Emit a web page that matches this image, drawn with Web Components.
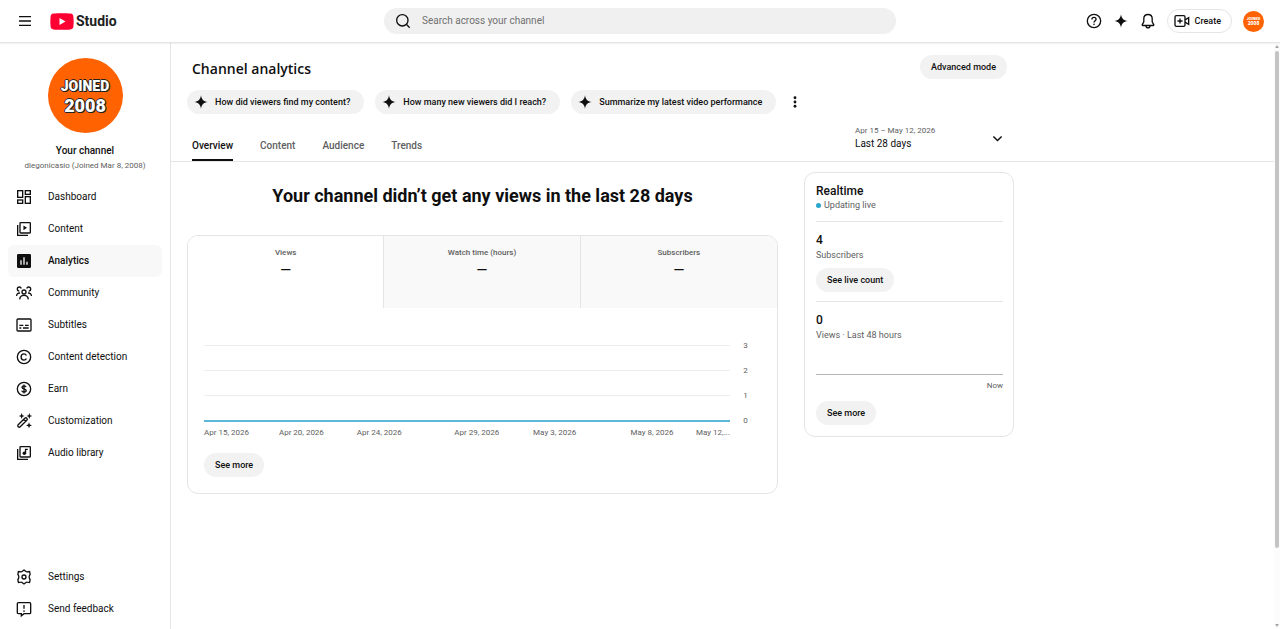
<!DOCTYPE html>
<html lang="en">
<head>
<meta charset="utf-8">
<meta name="viewport" content="width=device-width, initial-scale=1">
<title>Channel analytics - YouTube Studio</title>
<style>
  html, body { margin: 0; background: #fff; }
  body {
    --ink: #0f0f0f;
    --muted: #606060;
    --chip: #f2f2f2;
    --line: #e5e5e5;
    --accent: #2ba6cb;
    color: var(--ink);
    font: 400 10px/16px Roboto, "Liberation Sans", sans-serif;
  }
</style>
</head>
<body>
<studio-app></studio-app>

<script>
const ICONS = {
  menu: '<path d="M3 5.5h18M3 12h18M3 18.5h18"/>',
  search: '<circle cx="11" cy="11" r="8.500"/><path d="M17 17l5 5"/>',
  help: '<circle cx="12" cy="12" r="10"/><path d="M8.9 9.6c0-1.8 1.3-3 3.1-3s3.1 1.1 3.1 2.8c0 2.2-3 2.3-3 4.8"/><circle class="f" cx="12" cy="17" r="1.2"/>',
  spark: '<path class="f" d="M12 2c.9 6.2 3.8 9.100 10 10-6.200.9-9.100 3.800-10 10-.9-6.200-3.800-9.100-10-10 6.200-.9 9.100-3.800 10-10z"/>',
  bell: '<path d="M12 2.300c-3.700 0-6.300 2.700-6.300 6.400v4.600L3.400 17.400c-.3.600 0 1.300.8 1.300h15.600c.8 0 1.100-.7.8-1.300l-2.300-4.100V8.700c0-3.700-2.600-6.400-6.300-6.400z"/><path d="M9 19c0 1.900 1.300 3.200 3 3.200s3-1.300 3-3.200"/>',
  create: '<rect x="1.500" y="4" width="15" height="16" rx="2"/><path d="M9 8.200v7.600M5.200 12h7.600M16.500 10.200l5.500-3.200v10l-5.500-3.200"/>',
  dashboard: '<rect x="2.500" y="2.500" width="7.500" height="10"/><rect x="14" y="2.500" width="7.500" height="5.500"/><rect x="2.500" y="16.500" width="7.500" height="5"/><rect x="14" y="11.500" width="7.500" height="10"/>',
  content: '<rect x="6" y="2.500" width="15.500" height="15.500" rx="1"/><path d="M2.500 6v15.500H18"/><path class="f" d="M11.200 6.700v7l5.300-3.500z"/>',
  analytics: '<path class="f" fill-rule="evenodd" d="M3.500 1.500h17a2 2 0 0 1 2 2v17a2 2 0 0 1-2 2h-17a2 2 0 0 1-2-2v-17a2 2 0 0 1 2-2zM6.500 11v6.500h2V11zM11 6.500v11h2v-11zM15.500 13v4.500h2V13z"/>',
  community: '<circle cx="12" cy="10.500" r="3"/><path d="M5.500 21.500c.3-3.900 3-6 6.500-6s6.200 2.100 6.500 6M8 5.300C7.400 3.700 6.200 3 4.900 3 3.200 3 2 4.300 2 6s1.200 3.200 2.900 3.200M.8 16.500c.2-2.900 2-4.800 5.200-4.500M16 5.300c.6-1.600 1.800-2.300 3.100-2.300C20.800 3 22 4.300 22 6s-1.200 3.200-2.900 3.200M23.200 16.500c-.2-2.900-2-4.800-5.200-4.500"/>',
  subtitles: '<rect x="1.500" y="3" width="21" height="18" rx="1.500"/><path d="M5 12.500h6M13.500 12.500h5.500M5 16.500h3M10.500 16.500H19"/>',
  copyright: '<circle cx="12" cy="12" r="10"/><path d="M15.600 9.700c-.7-1.500-2-2.300-3.600-2.300-2.500 0-4.300 1.900-4.300 4.600s1.800 4.600 4.300 4.600c1.600 0 2.900-.8 3.600-2.300"/>',
  earn: '<circle cx="12" cy="12" r="10"/><path d="M15 9.300c-.3-1.300-1.400-2-3-2-1.800 0-3 .8-3 2.200 0 3.300 6.300 1.600 6.300 4.900 0 1.500-1.300 2.400-3.300 2.400-1.800 0-3-.8-3.300-2.200M12 5.200v13.600"/>',
  customize: '<path d="M3.300 17.700L13.200 7.800a2.100 2.100 0 0 1 3 3L6.300 20.700a2.100 2.100 0 0 1-3-3zM11.500 9.500l3 3"/><path class="f" d="M8.500 0l1.200 3.300L13 4.500 9.700 5.700 8.500 9 7.300 5.700 4 4.500l3.300-1.200zM20 0l1.200 3.300 3.300 1.200-3.300 1.200L20 9l-1.200-3.300-3.300-1.200 3.300-1.200zM19.500 14l1.200 3.300 3.300 1.200-3.300 1.200-1.200 3.300-1.200-3.300-3.300-1.200 3.300-1.200z"/>',
  audio: '<rect x="6" y="2.500" width="15.500" height="15.500" rx="1"/><path d="M2.500 6v15.500H18"/><circle class="f" cx="12.500" cy="12.500" r="2.600"/><path d="M14.300 12.500V6.500h3.400"/>',
  settings: '<path d="M12 1.500l3 2.400c.5.400 1 .5 1.600.4l3.700-.5.9 3.900-1.300 3c-.2.600-.2 1.500 0 2.600l1.300 3-.9 3.900-3.700-.5c-.6-.1-1.100 0-1.600.4l-3 2.400-3-2.400c-.5-.4-1-.5-1.600-.4l-3.700.5-.9-3.900 1.300-3c.2-1.100.2-2 0-2.600l-1.300-3 .9-3.900 3.700.5c.6.100 1.100 0 1.600-.4z"/><circle cx="12" cy="12" r="3"/>',
  feedback: '<path d="M3.500 2.500h17c.8 0 1.500.7 1.500 1.500v13.500c0 .8-.7 1.500-1.500 1.500H12l-4 3.200V19H3.500c-.8 0-1.500-.7-1.500-1.500V4c0-.8.7-1.500 1.500-1.500z"/><path d="M12 6v5.500"/><circle class="f" cx="12" cy="15" r="1.300"/>',
  more: '<circle class="f" cx="12" cy="3.500" r="2.800"/><circle class="f" cx="12" cy="12" r="2.800"/><circle class="f" cx="12" cy="20.500" r="2.800"/>',
  chevron: '<path stroke-width="3.200" d="M3 7.500l9 9 9-9"/>'
};

/* Registers an element whose shadow root is cloned from a template. */
function component(name, html, setup) {
  const template = document.createElement('template');
  template.innerHTML = html;
  customElements.define(name, class extends HTMLElement {
    connectedCallback() {
      if (this.shadowRoot) return;
      this.attachShadow({ mode: 'open' }).append(template.content.cloneNode(true));
      if (setup) setup(this, this.shadowRoot);
    }
  });
}

component('ui-icon', `
<style>
  :host { display: block; width: 16px; height: 16px; flex: none; }
  svg { display: block; width: 100%; height: 100%; fill: none; stroke: currentColor; stroke-width: 2; overflow: visible; }
  .f { fill: currentColor; stroke: none; }
</style>
<svg viewBox="0 0 24 24" aria-hidden="true"></svg>`,
(el, root) => { root.querySelector('svg').innerHTML = ICONS[el.getAttribute('name')]; });

component('channel-avatar', `
<style>
  :host { display: grid; place-content: center; box-sizing: border-box; width: 75px; height: 75px; border-radius: 50%;
    background: #ff6200; color: #fff; text-align: center; flex: none;
    font: 900 14px/19px Roboto, sans-serif;
    text-shadow: 1px 0 #222, -1px 0 #222, 0 1px #222, 0 -1px #222, 1px 1px #222; }
  .year { font-size: 18px; }
  :host([small]) { width: 21px; height: 21px; font-size: 4px; line-height: 5px; text-shadow: none; }
  :host([small]) .year { font-size: 5px; }
  span { display: block; }
</style>
<span>JOINED</span><span class="year">2008</span>`);

component('pill-button', `
<style>
  :host { display: inline-block; }
  button { display: flex; align-items: center; height: 24px; margin: 0; padding: 0 11px; border: 0; border-radius: 12px;
    background: var(--chip); color: var(--ink); font: 500 9px/16px Roboto, sans-serif; white-space: nowrap; cursor: pointer; }
  :host([outlined]) button { background: #fff; border: 1px solid var(--line); padding: 0 10px 0 6px; gap: 5px; }
  :host([chip]) button { padding: 0 14px 0 6px; gap: 6px; }
</style>
<button type="button"><slot></slot></button>`,
(el, root) => {
  if (!el.hasAttribute('icon')) return;
  const icon = document.createElement('ui-icon');
  icon.setAttribute('name', el.getAttribute('icon'));
  root.querySelector('button').prepend(icon);
});

component('studio-header', `
<style>
  :host { display: grid; grid-template-columns: 1fr 40vw 1fr; align-items: center; height: 42px; padding: 0 16px;
    border-bottom: 1px solid var(--line); box-shadow: 0 1px 1px #0000000d; position: relative; z-index: 1; background: #fff; }
  .start, .end { display: flex; align-items: center; }
  .end { justify-content: flex-end; gap: 11px; }
  .icon { display: block; padding: 0; border: 0; background: none; color: var(--ink); }
  .start .icon ui-icon { margin: 0 1px; }
  .logo { display: flex; align-items: center; gap: 2px; margin-left: 16px; color: #212121; text-decoration: none;
    font: 700 14px/20px Roboto, sans-serif; }
  .logo svg { display: block; width: 24px; height: 17px; }
  form { display: flex; align-items: center; gap: 11px; height: 26px; margin: 0; padding: 0 11px; border-radius: 13px; background: #f0f0f0; }
  input { flex: 1; min-width: 0; padding: 0; border: 0; outline: 0; background: none; color: var(--ink); font: 400 10px/16px Roboto, sans-serif; }
  input::placeholder { color: #717171; opacity: 1; }
</style>
<div class="start">
  <button class="icon" type="button" aria-label="Collapse menu"><ui-icon name="menu"></ui-icon></button>
  <a class="logo" href="#home">
    <svg viewBox="0 0 24 17" aria-hidden="true"><path fill="#ff0033" d="M3.500.6C8 .1 16 .1 20.500.6c2 .2 2.700 1.200 2.900 2.900.4 3.300.4 6.700 0 10-.2 1.700-.9 2.700-2.900 2.900-4.500.5-12.500.5-17 0-2-.2-2.700-1.200-2.900-2.900-.4-3.300-.4-6.700 0-10C.8 1.800 1.500.8 3.500.6z"/><path fill="#fff" d="M9.500 5v7l6-3.500z"/></svg>
    <span>Studio</span>
  </a>
</div>
<form role="search">
  <ui-icon name="search"></ui-icon>
  <input type="text" aria-label="Search across your channel" placeholder="Search across your channel">
</form>
<div class="end">
  <button class="icon" type="button" aria-label="Help"><ui-icon name="help"></ui-icon></button>
  <button class="icon" type="button" aria-label="Ask Studio"><ui-icon name="spark"></ui-icon></button>
  <button class="icon" type="button" aria-label="Notifications"><ui-icon name="bell"></ui-icon></button>
  <pill-button outlined icon="create">Create</pill-button>
  <channel-avatar small></channel-avatar>
</div>`);

component('nav-item', `
<style>
  :host { display: block; }
  a { display: flex; align-items: center; gap: 16px; height: 32px; padding: 0 8px; border-radius: 6px; color: var(--ink); text-decoration: none; }
  :host([active]) a { background: #f8f8f8; font-weight: 500; }
</style>
<a><slot></slot></a>`,
(el, root) => {
  const name = el.getAttribute('icon');
  const link = root.querySelector('a');
  link.href = '#' + name;
  const icon = document.createElement('ui-icon');
  icon.setAttribute('name', name);
  link.prepend(icon);
});

component('studio-nav', `
<style>
  :host { display: flex; flex-direction: column; box-sizing: border-box; width: 171px; flex: none; padding: 15px 8px 4px;
    border-right: 1px solid var(--line); }
  .channel { display: flex; flex-direction: column; align-items: center; padding-bottom: 8px; }
  .channel strong { margin-top: 10px; font-weight: 500; line-height: 15px; }
  .channel span { color: var(--muted); font-size: 8px; line-height: 15px; white-space: nowrap; }
  .bottom { margin-top: auto; }
</style>
<div class="channel">
  <channel-avatar></channel-avatar>
  <strong>Your channel</strong>
  <span>diegonicasio (Joined Mar 8, 2008)</span>
</div>
<nav>
  <nav-item icon="dashboard">Dashboard</nav-item>
  <nav-item icon="content">Content</nav-item>
  <nav-item icon="analytics" active>Analytics</nav-item>
  <nav-item icon="community">Community</nav-item>
  <nav-item icon="subtitles">Subtitles</nav-item>
  <nav-item icon="copyright">Content detection</nav-item>
  <nav-item icon="earn">Earn</nav-item>
  <nav-item icon="customize">Customization</nav-item>
  <nav-item icon="audio">Audio library</nav-item>
</nav>
<nav class="bottom">
  <nav-item icon="settings">Settings</nav-item>
  <nav-item icon="feedback">Send feedback</nav-item>
</nav>`);

component('period-picker', `
<style>
  :host { display: block; position: relative; width: 148px; }
  label { display: block; color: var(--muted); font-size: 8px; line-height: 13px; }
  select { display: block; width: 100%; margin: 0; padding: 0; border: 0; background: none; appearance: none; color: var(--ink); font: 400 10px/14px Roboto, sans-serif; }
  ui-icon { position: absolute; right: 0; top: 9px; width: 11px; height: 11px; pointer-events: none; }
</style>
<label for="period">Apr 15 – May 12, 2026</label>
<select id="period"><option>Last 28 days</option></select>
<ui-icon name="chevron"></ui-icon>`);

component('analytics-header', `
<style>
  :host { display: block; border-bottom: 1px solid var(--line); padding: 12px 16px 0; }
  .wrap { max-width: 827px; }
  .title, .tabs-row { display: flex; justify-content: space-between; padding: 0 7px 0 5px; }
  h1 { margin: 0; padding-top: 4px; font: 600 14px/20px "Open Sans", "Noto Sans", sans-serif; }
  .chips { display: flex; align-items: center; gap: 11px; margin-top: 11px; }
  .more { display: block; padding: 0; border: 0; background: none; color: var(--ink); margin-left: 2px; }
  .more ui-icon { width: 12px; height: 12px; }
  .tabs { display: flex; gap: 27px; padding-top: 15px; }
  .tabs a { display: block; height: 30px; line-height: 34px; border-bottom: 2px solid transparent; font-weight: 500; color: var(--muted); text-decoration: none; }
  .tabs a[aria-current] { color: var(--ink); border-color: var(--ink); }
  period-picker { margin: 10px 4px 0 0; }
</style>
<div class="wrap">
  <div class="title"><h1>Channel analytics</h1><pill-button>Advanced mode</pill-button></div>
  <div class="chips">
    <pill-button chip icon="spark">How did viewers find my content?</pill-button>
    <pill-button chip icon="spark">How many new viewers did I reach?</pill-button>
    <pill-button chip icon="spark">Summarize my latest video performance</pill-button>
    <button class="more" type="button" aria-label="More"><ui-icon name="more"></ui-icon></button>
  </div>
  <div class="tabs-row">
    <nav class="tabs"><a href="#overview" aria-current="page">Overview</a><a href="#content">Content</a><a href="#audience">Audience</a><a href="#trends">Trends</a></nav>
    <period-picker></period-picker>
  </div>
</div>`);

component('metric-tab', `
<style>
  :host { display: block; }
  button { display: flex; flex-direction: column; align-items: center; width: 100%; height: 72px; margin: 0; padding: 9px 0 0; border: 0;
    border-right: 1px solid var(--line); background: #f9f9f9; color: var(--muted); font: 500 8px/15px Roboto, sans-serif; }
  :host([active]) button { background: #fff; }
  :host(:last-child) button { border-right: 0; }
  b { color: var(--ink); font: 500 14px/20px Roboto, sans-serif; }
</style>
<button type="button"><slot></slot><b>—</b></button>`);

component('views-chart', `
<style>
  :host { display: block; padding: 25px 0 0; }
  .row { display: grid; grid-template-columns: minmax(0, 1fr) 31px; align-items: center; height: 25px; font-size: 8px; color: var(--muted); }
  .row i { border-top: 1px solid #ededed; }
  .row span { text-align: center; }
  .row:last-of-type i { border-top: 2px solid #5bb8d6; }
  .dates { display: grid; grid-template-columns: repeat(54, minmax(0, 1fr)); margin: -5px 31px 0 0; color: var(--muted); font-size: 8px; line-height: 10px; }
  .dates span { display: flex; justify-content: center; white-space: nowrap; }
  .dates span:first-child { justify-content: start; }
  .dates span:last-child { justify-content: end; }
</style>
<div class="plot">
  <div class="row"><i></i><span>3</span></div>
  <div class="row"><i></i><span>2</span></div>
  <div class="row"><i></i><span>1</span></div>
  <div class="row"><i></i><span>0</span></div>
</div>
<div class="dates">
  <span style="grid-column:1/7">Apr 15, 2026</span>
  <span style="grid-column:8/14">Apr 20, 2026</span>
  <span style="grid-column:16/22">Apr 24, 2026</span>
  <span style="grid-column:26/32">Apr 29, 2026</span>
  <span style="grid-column:34/40">May 3, 2026</span>
  <span style="grid-column:44/50">May 8, 2026</span>
  <span style="grid-column:50/55">May 12,...</span>
</div>`);

component('overview-card', `
<style>
  :host { display: block; border: 1px solid var(--line); border-radius: 11px; overflow: hidden; }
  .metrics { display: grid; grid-template-columns: repeat(3, 1fr); }
  .body { padding: 0 16px 16px; }
  pill-button { display: block; width: max-content; margin-top: 15px; }
</style>
<div class="metrics">
  <metric-tab active>Views</metric-tab>
  <metric-tab>Watch time (hours)</metric-tab>
  <metric-tab>Subscribers</metric-tab>
</div>
<div class="body"><views-chart></views-chart><pill-button>See more</pill-button></div>`);

component('realtime-card', `
<style>
  :host { display: block; padding: 10px 10px 11px 11px; border: 1px solid var(--line); border-radius: 11px; }
  h2, strong { display: block; margin: 0; font: 500 12px/16px Roboto, sans-serif; }
  strong { margin-bottom: 1px; }
  p { margin: 0; color: var(--muted); font-size: 9px; line-height: 13px; }
  .live { display: flex; align-items: center; gap: 3px; }
  .live::before { content: ""; width: 5px; height: 5px; border-radius: 50%; background: var(--accent); }
  section { margin-top: 9px; padding-top: 10px; border-top: 1px solid var(--line); }
  pill-button { display: block; width: max-content; margin-top: 6px; }
  .spark { height: 32px; border-bottom: 1px solid #b5b5b5; }
  .now { margin-top: 4px; text-align: right; font-size: 8px; }
  .now + pill-button { margin-top: 9px; }
</style>
<h2>Realtime</h2>
<p class="live">Updating live</p>
<section><strong>4</strong><p>Subscribers</p><pill-button>See live count</pill-button></section>
<section><strong>0</strong><p>Views · Last 48 hours</p><div class="spark"></div><p class="now">Now</p><pill-button>See more</pill-button></section>`);

component('scroll-rail', `
<style>
  :host { position: absolute; top: 1px; right: 0; bottom: 0; width: 6px; display: flex; flex-direction: column; align-items: center; background: #fcfcfc; }
  i { border: 2px solid transparent; border-bottom: 3px solid #a8a8a8; border-top: 0; margin: 1px 0 3px; }
  i:last-child { border-top: 3px solid #a8a8a8; border-bottom: 0; margin: auto 0 2px; }
  b { width: 4px; height: 85%; border-radius: 2px; background: #c4c4c4; }
</style>
<i></i><b></b><i></i>`);

component('studio-app', `
<style>
  :host { display: flex; flex-direction: column; min-height: 100vh; }
  .body { display: flex; flex: 1; }
  main { position: relative; flex: 1; min-width: 0; }
  .grid { display: grid; grid-template-columns: minmax(0, 1fr) 210px; gap: 26px; align-items: start; max-width: 827px; padding: 10px 16px; }
  h2 { margin: 11px 0 26px; text-align: center; font: 700 18px/26px Roboto, sans-serif; }
</style>
<studio-header></studio-header>
<div class="body">
  <studio-nav></studio-nav>
  <main>
    <analytics-header></analytics-header>
    <div class="grid">
      <div><h2>Your channel didn’t get any views in the last 28 days</h2><overview-card></overview-card></div>
      <realtime-card></realtime-card>
    </div>
    <scroll-rail></scroll-rail>
  </main>
</div>`);
</script>
</body>
</html>
